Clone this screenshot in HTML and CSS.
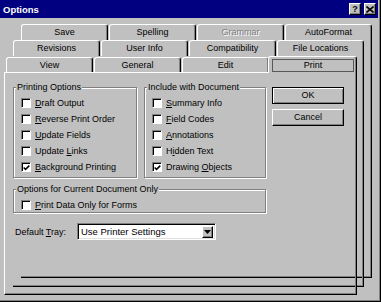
FILE: index.html
```html
<!DOCTYPE html>
<html lang="en">

<head>
    <meta charset="utf-8" />
    <meta name="viewport" content="width=device-width, initial-scale=1.0" />
    <title>Options</title>
    <link rel="stylesheet" href="styles.css">
</head>

<body>
    <div class="window">
        <div class="titlebar">
            <span class="title">Options</span>
            <div class="caption-buttons">
                <span class="cap-btn help">?</span>
                <span class="cap-btn">
                    <svg width="8" height="7" viewBox="0 0 8 7">
                        <path d="M0.5 0.5 L7.5 6.5 M7.5 0.5 L0.5 6.5" stroke="#000" stroke-width="1.6" />
                    </svg>
                </span>
            </div>
        </div>

        <div class="deck">
            <!-- back card: first row of tabs -->
            <div class="card card-back2">
                <div class="tab-row">
                    <div class="tab">Save</div>
                    <div class="tab">Spelling</div>
                    <div class="tab disabled">Grammar</div>
                    <div class="tab">AutoFormat</div>
                </div>
                <div class="card-body"></div>
            </div>

            <!-- middle card: second row -->
            <div class="card card-back1">
                <div class="tab-row">
                    <div class="tab">Revisions</div>
                    <div class="tab">User Info</div>
                    <div class="tab">Compatibility</div>
                    <div class="tab">File Locations</div>
                </div>
                <div class="card-body"></div>
            </div>

            <!-- front card with the Print page -->
            <div class="card card-front">
                <div class="tab-row front-row">
                    <div class="tab">View</div>
                    <div class="tab">General</div>
                    <div class="tab">Edit</div>
                    <div class="tab active"><span class="focus">Print</span></div>
                </div>

                <div class="page">
                    <div class="main-col">
                        <div class="groups-row">
                            <div class="group group-print">
                                <span class="group-title">Printing Options</span>
                                <div class="check-row"><span class="box"></span><span><u>D</u>raft Output</span></div>
                                <div class="check-row"><span class="box"></span><span><u>R</u>everse Print Order</span></div>
                                <div class="check-row"><span class="box"></span><span><u>U</u>pdate Fields</span></div>
                                <div class="check-row"><span class="box"></span><span>Update <u>L</u>inks</span></div>
                                <div class="check-row">
                                    <span class="box">
                                        <svg width="8" height="8" viewBox="0 0 8 8">
                                            <polyline points="0.8,3.4 2.9,5.6 7.2,1.3" fill="none" stroke="#000" stroke-width="1.7" />
                                        </svg>
                                    </span>
                                    <span><u>B</u>ackground Printing</span>
                                </div>
                            </div>

                            <div class="group group-include">
                                <span class="group-title">Include with Document</span>
                                <div class="check-row"><span class="box"></span><span><u>S</u>ummary Info</span></div>
                                <div class="check-row"><span class="box"></span><span><u>F</u>ield Codes</span></div>
                                <div class="check-row"><span class="box"></span><span><u>A</u>nnotations</span></div>
                                <div class="check-row"><span class="box"></span><span>H<u>i</u>dden Text</span></div>
                                <div class="check-row">
                                    <span class="box">
                                        <svg width="8" height="8" viewBox="0 0 8 8">
                                            <polyline points="0.8,3.4 2.9,5.6 7.2,1.3" fill="none" stroke="#000" stroke-width="1.7" />
                                        </svg>
                                    </span>
                                    <span>Drawing <u>O</u>bjects</span>
                                </div>
                            </div>
                        </div>

                        <div class="group group-current">
                            <span class="group-title">Options for Current Document Only</span>
                            <div class="check-row"><span class="box"></span><span><u>P</u>rint Data Only for Forms</span></div>
                        </div>

                        <div class="tray-row">
                            <span class="tray-label">Default <u>T</u>ray:</span>
                            <div class="select">
                                <span>Use Printer Settings</span>
                                <span class="drop-btn">
                                    <svg width="7" height="4" viewBox="0 0 7 4">
                                        <path d="M0 0 H7 L3.5 4 Z" fill="#000" />
                                    </svg>
                                </span>
                            </div>
                        </div>
                    </div>

                    <div class="button-col">
                        <div class="btn default">OK</div>
                        <div class="btn">Cancel</div>
                    </div>
                </div>
            </div>
        </div>
    </div>
</body>

</html>
```

FILE: styles.css
```css
body {
    margin: 0;
    font-family: "Liberation Sans", Arial, sans-serif;
    font-size: 9px;
    color: #000;
    background-color: #c0c0c0;
}

.window {
    width: 381px;
    height: 302px;
    box-sizing: border-box;
    background-color: #c0c0c0;
    border-right: 1px solid #000;
    border-bottom: 1px solid #000;
    box-shadow: inset -1px -1px 0 #808080;
    overflow: hidden;
}

.titlebar {
    width: 378px;
    height: 18px;
    box-sizing: border-box;
    background-color: #000080;
    color: #fff;
    display: flex;
    align-items: center;
    padding: 0 2px 0 3px;
}

.title {
    font-weight: bold;
    font-size: 9.5px;
}

.caption-buttons {
    margin-left: auto;
    display: flex;
    gap: 3px;
}

.cap-btn {
    width: 12px;
    height: 12px;
    box-sizing: border-box;
    background-color: #c0c0c0;
    border-top: 1px solid #fff;
    border-left: 1px solid #fff;
    border-right: 1px solid #000;
    border-bottom: 1px solid #000;
    box-shadow: inset -1px -1px 0 #808080;
    display: flex;
    align-items: center;
    justify-content: center;
    color: #000;
}

.cap-btn.help {
    font-weight: bold;
    font-size: 9px;
    line-height: 10px;
}

/* stacked tab cards */
.deck {
    display: grid;
}

.card {
    grid-area: 1 / 1;
    display: flex;
    flex-direction: column;
}

.card-back2 {
    margin: 6px 0 0 21px;
    width: 351px;
    height: 254px;
}

.card-back1 {
    margin: 22px 0 0 13px;
    width: 351px;
    height: 247px;
}

.card-front {
    margin: 38px 0 0 4px;
    width: 353px;
    height: 239px;
}

.tab-row {
    display: flex;
    gap: 1px;
    height: 16px;
}

.tab {
    width: 87px;
    height: 16px;
    box-sizing: border-box;
    background-color: #c0c0c0;
    border-top: 1px solid #fff;
    border-left: 1px solid #fff;
    border-right: 1px solid #000;
    box-shadow: inset -1px 0 0 #808080;
    border-radius: 3px 3px 0 0;
    text-align: center;
    line-height: 15px;
}

.tab.disabled {
    color: #808080;
    text-shadow: 1px 1px 0 #fff;
}

.card-body {
    flex: 1;
    border-right: 1px solid #000;
    border-bottom: 1px solid #000;
    box-shadow: inset -1px -1px 0 #808080;
}

.front-row {
    height: 17px;
    padding-left: 2px;
    margin-bottom: -1px;
    position: relative;
    z-index: 1;
}

.front-row .tab {
    margin-top: 1px;
    height: 15px;
    line-height: 14px;
}

.front-row .tab.active {
    margin-top: 0;
    margin-left: -2px;
    width: 89px;
    height: 17px;
    padding: 2px 2px 0 3px;
}

.focus {
    display: block;
    height: 13px;
    box-sizing: border-box;
    border: 1px solid #585858;
    line-height: 11px;
}

.page {
    flex: 1;
    display: flex;
    gap: 6px;
    padding: 14px 0 0 8px;
    border-top: 1px solid #fff;
    border-left: 1px solid #fff;
    border-right: 1px solid #000;
    border-bottom: 1px solid #000;
    box-shadow: inset -1px -1px 0 #808080;
}

.main-col {
    width: 253px;
}

.groups-row {
    display: flex;
    gap: 7px;
}

.group {
    border: 1px solid #808080;
    box-shadow: inset 1px 1px 0 #fff, 1px 1px 0 #fff;
    padding: 0 0 2px 7px;
}

.group-print {
    width: 124px;
    box-sizing: border-box;
}

.group-include {
    width: 122px;
    box-sizing: border-box;
}

.group-current {
    margin-top: 11px;
    padding-bottom: 0;
}

.group-current .check-row {
    height: 15px;
}

.group-title {
    display: table;
    margin: -6px 0 2px -5px;
    padding: 0 1px;
    line-height: 11px;
    background-color: #c0c0c0;
}

.check-row {
    display: flex;
    align-items: center;
    gap: 4px;
    height: 16px;
    white-space: nowrap;
}

.box {
    width: 10px;
    height: 10px;
    box-sizing: border-box;
    flex-shrink: 0;
    background-color: #fff;
    border: 1px solid;
    border-color: #808080 #fff #fff #808080;
    box-shadow: inset 1px 1px 0 #000;
    display: flex;
    align-items: center;
    justify-content: center;
    padding: 1px 0 0 1px;
}

.tray-row {
    margin-top: 10px;
    padding-left: 2px;
    display: flex;
    align-items: center;
    height: 17px;
}

.tray-label {
    width: 62px;
}

.select {
    width: 139px;
    height: 17px;
    box-sizing: border-box;
    background-color: #fff;
    border: 1px solid;
    border-color: #808080 #fff #fff #808080;
    box-shadow: inset 1px 1px 0 #000, inset -1px -1px 0 #dfdfdf;
    display: flex;
    align-items: center;
    padding: 0 2px 0 3px;
    font-size: 9.5px;
}

.drop-btn {
    margin-left: auto;
    width: 11px;
    height: 12px;
    box-sizing: border-box;
    background-color: #c0c0c0;
    border-top: 1px solid #fff;
    border-left: 1px solid #fff;
    border-right: 1px solid #000;
    border-bottom: 1px solid #000;
    box-shadow: inset -1px -1px 0 #808080;
    display: flex;
    align-items: center;
    justify-content: center;
}

.button-col {
    display: flex;
    flex-direction: column;
    gap: 5px;
}

.btn {
    width: 72px;
    height: 17px;
    box-sizing: border-box;
    background-color: #c0c0c0;
    border-top: 1px solid #fff;
    border-left: 1px solid #fff;
    border-right: 1px solid #000;
    border-bottom: 1px solid #000;
    box-shadow: inset -1px -1px 0 #808080;
    text-align: center;
    line-height: 15px;
}

.btn.default {
    border: 1px solid #000;
    box-shadow: inset 1px 1px 0 #fff, inset -1px -1px 0 #808080;
}
```
